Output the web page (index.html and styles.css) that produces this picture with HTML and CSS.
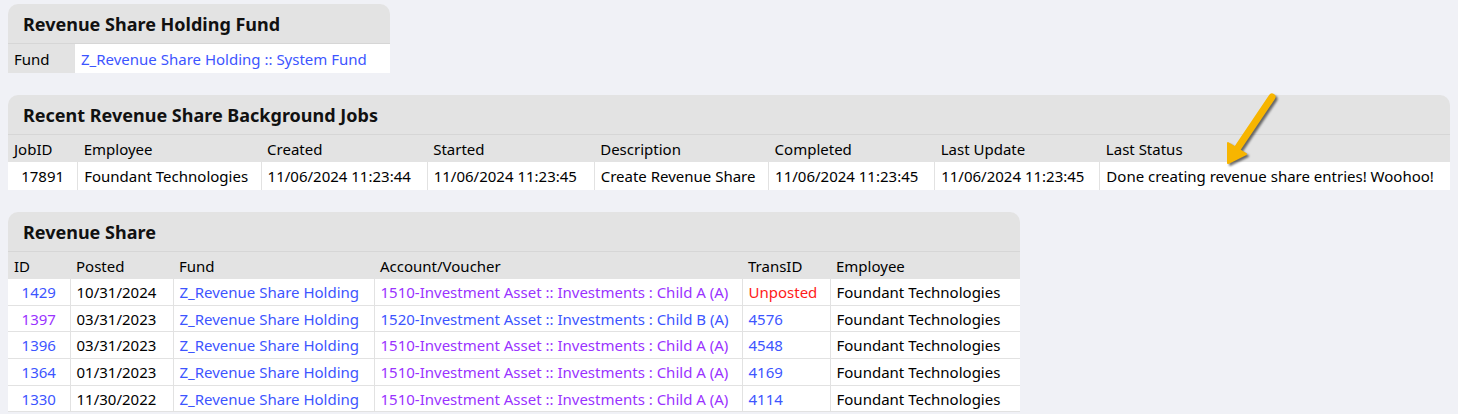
FILE: index.html
```html
<!DOCTYPE html>
<html lang="en">

<head>
  <meta charset="UTF-8" />
  <meta name="viewport" content="width=device-width, initial-scale=1.0" />
  <title>Revenue Share</title>
  <link rel="stylesheet" href="styles.css">
</head>

<body>

  <!-- Holding fund -->
  <div class="panel">
    <h2 class="panel-title">Revenue Share Holding Fund</h2>
    <table class="grid fund-table">
      <tr>
        <td class="label">Fund</td>
        <td><a href="#">Z_Revenue Share Holding :: System Fund</a></td>
      </tr>
    </table>
  </div>

  <!-- Background jobs -->
  <div class="panel">
    <h2 class="panel-title">Recent Revenue Share Background Jobs</h2>
    <table class="grid jobs-table">
      <thead>
        <tr>
          <th>JobID</th>
          <th>Employee</th>
          <th>Created</th>
          <th>Started</th>
          <th>Description</th>
          <th>Completed</th>
          <th>Last Update</th>
          <th>Last Status</th>
        </tr>
      </thead>
      <tbody>
        <tr>
          <td class="center">17891</td>
          <td>Foundant Technologies</td>
          <td>11/06/2024 11:23:44</td>
          <td>11/06/2024 11:23:45</td>
          <td>Create Revenue Share</td>
          <td>11/06/2024 11:23:45</td>
          <td>11/06/2024 11:23:45</td>
          <td>Done creating revenue share entries! Woohoo!</td>
        </tr>
      </tbody>
    </table>
  </div>

  <!-- Revenue share entries -->
  <div class="panel">
    <h2 class="panel-title">Revenue Share</h2>
    <table class="grid share-table">
      <thead>
        <tr>
          <th>ID</th>
          <th>Posted</th>
          <th>Fund</th>
          <th>Account/Voucher</th>
          <th>TransID</th>
          <th>Employee</th>
        </tr>
      </thead>
      <tbody>
        <tr>
          <td class="center"><a href="#">1429</a></td>
          <td>10/31/2024</td>
          <td><a href="#">Z_Revenue Share Holding</a></td>
          <td><a href="#" class="visited">1510-Investment Asset :: Investments : Child A (A)</a></td>
          <td class="unposted">Unposted</td>
          <td>Foundant Technologies</td>
        </tr>
        <tr>
          <td class="center"><a href="#" class="visited">1397</a></td>
          <td>03/31/2023</td>
          <td><a href="#">Z_Revenue Share Holding</a></td>
          <td><a href="#">1520-Investment Asset :: Investments : Child B (A)</a></td>
          <td><a href="#">4576</a></td>
          <td>Foundant Technologies</td>
        </tr>
        <tr>
          <td class="center"><a href="#">1396</a></td>
          <td>03/31/2023</td>
          <td><a href="#">Z_Revenue Share Holding</a></td>
          <td><a href="#" class="visited">1510-Investment Asset :: Investments : Child A (A)</a></td>
          <td><a href="#">4548</a></td>
          <td>Foundant Technologies</td>
        </tr>
        <tr>
          <td class="center"><a href="#">1364</a></td>
          <td>01/31/2023</td>
          <td><a href="#">Z_Revenue Share Holding</a></td>
          <td><a href="#" class="visited">1510-Investment Asset :: Investments : Child A (A)</a></td>
          <td><a href="#">4169</a></td>
          <td>Foundant Technologies</td>
        </tr>
        <tr>
          <td class="center"><a href="#">1330</a></td>
          <td>11/30/2022</td>
          <td><a href="#">Z_Revenue Share Holding</a></td>
          <td><a href="#" class="visited">1510-Investment Asset :: Investments : Child A (A)</a></td>
          <td><a href="#">4114</a></td>
          <td>Foundant Technologies</td>
        </tr>
      </tbody>
    </table>
  </div>

  <!-- Callout arrow -->
  <svg class="callout" width="70" height="85" viewBox="0 0 70 85">
    <line x1="57" y1="9" x2="22" y2="61" stroke="#f7b500" stroke-width="7" stroke-linecap="round" />
    <polygon points="13,75 13,55 31,66" fill="#f7b500" stroke="#f7b500" stroke-width="2" stroke-linejoin="round" />
  </svg>

</body>

</html>
```

FILE: styles.css
```css
body {
  font-family: "Noto Sans", "Open Sans", sans-serif;
  font-size: 15px;
  color: #000;
  background-color: #f0f1f6;
  margin: 0;
  padding: 4px 8px;
  display: flex;
  flex-direction: column;
  align-items: flex-start;
  gap: 22px;
}

.panel {
  background-color: #e3e3e3;
  border-radius: 10px 10px 0 0;
}

.panel-title {
  margin: 0;
  padding: 8px 15px 7px;
  font-size: 18px;
  line-height: 24px;
  font-weight: bold;
  color: #111;
  border-bottom: 1px solid #d6d6d6;
}

.grid {
  border-collapse: collapse;
  table-layout: fixed;
}

.grid th,
.grid td {
  padding: 0 6px;
  line-height: 18px;
  text-align: left;
  font-weight: normal;
  white-space: nowrap;
  overflow: hidden;
}

.grid th {
  height: 27px;
}

.grid td {
  background-color: #fff;
  border: 1px solid #e2e2e2;
}

.grid tbody tr:first-child td {
  border-top: none;
}

.grid tr td:first-child {
  border-left: none;
}

.grid tr td:last-child {
  border-right: none;
}

.grid td.label {
  background-color: #e3e3e3;
  border: none;
}

.grid td.center {
  text-align: center;
}

a {
  color: #3d55ff;
  text-decoration: none;
}

a.visited {
  color: #9a33ff;
}

.unposted {
  color: #ff1a1a;
}

/* column widths */
.fund-table td {
  height: 29px;
  border-bottom: none;
}

.fund-table td:nth-child(1) { width: 54px; }
.fund-table td:nth-child(2) { width: 303px; }

.jobs-table th:nth-child(1) { width: 59px; }
.jobs-table th:nth-child(2) { width: 172px; }
.jobs-table th:nth-child(3) { width: 155px; }
.jobs-table th:nth-child(4) { width: 156px; }
.jobs-table th:nth-child(5) { width: 163px; }
.jobs-table th:nth-child(6) { width: 155px; }
.jobs-table th:nth-child(7) { width: 154px; }
.jobs-table th:nth-child(8) { width: 339px; }

.jobs-table td {
  height: 28px;
  border-bottom: none;
}

.share-table th:nth-child(1) { width: 50px; }
.share-table th:nth-child(2) { width: 91px; }
.share-table th:nth-child(3) { width: 189px; }
.share-table th:nth-child(4) { width: 356px; }
.share-table th:nth-child(5) { width: 76px; }
.share-table th:nth-child(6) { width: 178px; }

.share-table td {
  height: 25.7px;
}

.callout {
  position: absolute;
  left: 1215px;
  top: 88px;
  filter: drop-shadow(2px 2px 1px rgba(0, 0, 0, 0.55));
}
```
